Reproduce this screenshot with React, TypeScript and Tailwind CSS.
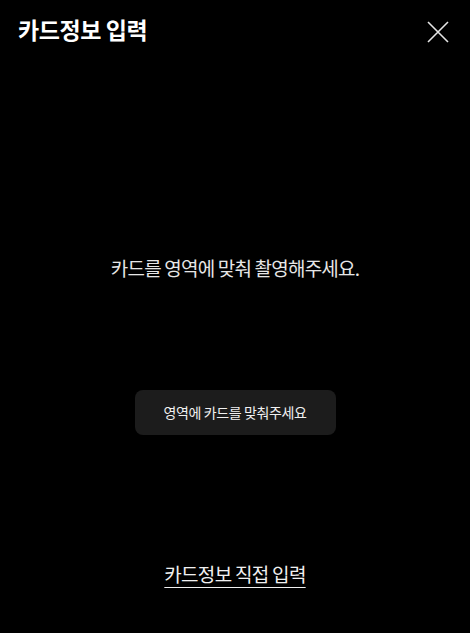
export default function App() {
  return (
    <div
      className="w-[470px] h-[633px] bg-black text-white flex flex-col"
      style={{ fontFamily: '"Noto Sans CJK KR", "Noto Sans", sans-serif' }}
    >
      <header className="flex items-center justify-between pl-[18px] pr-[21px] pt-[8px] h-[56px]">
        <h1 className="text-[23px] font-bold tracking-[-0.4px] leading-none pb-[6px]">카드정보 입력</h1>
        <button className="w-[22px] h-[22px]" aria-label="닫기">
          <svg viewBox="0 0 22 22" className="w-[22px] h-[22px]" fill="none" stroke="#e5e5e5" strokeWidth="1.6">
            <path d="M1 1L21 21M21 1L1 21" />
          </svg>
        </button>
      </header>

      <div className="h-[199px]" />
      <p className="text-center text-[19px] text-[#e6e6e6] tracking-[-0.8px] leading-[26px]">
        카드를 영역에 맞춰 촬영해주세요.
      </p>

      <div className="h-[109px]" />
      <div className="flex justify-center">
        <div className="w-[201px] h-[45px] rounded-[8px] bg-[#1c1c1c] flex items-center justify-center text-[14px] text-[#f0f0f0] tracking-[-0.4px]">
          영역에 카드를 맞춰주세요
        </div>
      </div>

      <div className="h-[126px]" />
      <div className="flex justify-center">
        <button className="text-[19px] text-[#f0f0f0] tracking-[-0.7px] leading-[26px] underline underline-offset-[5px] decoration-1">
          카드정보 직접 입력
        </button>
      </div>
    </div>
  );
}
